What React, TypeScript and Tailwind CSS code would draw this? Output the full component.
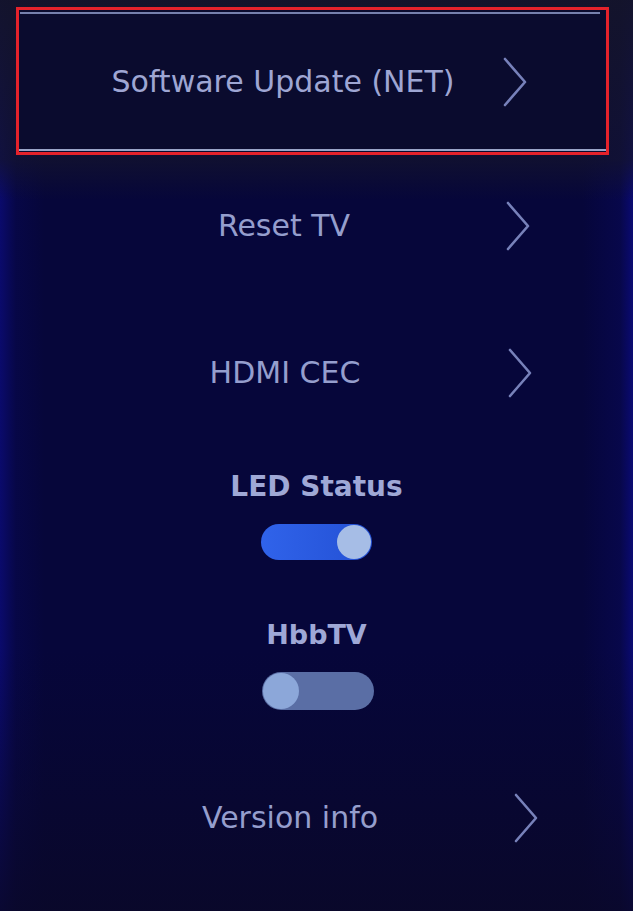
import { ReactNode } from "react";

function Chevron({ className }: { className?: string }) {
  return (
    <svg width="26" height="52" viewBox="0 0 26 52" className={className} fill="none">
      <polyline
        points="3,3 23,26 3,49"
        stroke="#7781ba"
        strokeWidth="2.6"
        strokeLinecap="round"
        strokeLinejoin="round"
      />
    </svg>
  );
}

function MenuRow({
  label,
  textOffset,
  chevronGap,
  className,
}: {
  label: string;
  textOffset: string;
  chevronGap: string;
  className?: string;
}) {
  return (
    <div className={`flex h-[60px] items-center ${className ?? ""}`}>
      <div className={`w-[400px] text-center text-[30px] leading-none text-[#959ecd] ${textOffset}`}>
        {label}
      </div>
      <Chevron className={chevronGap} />
    </div>
  );
}

function Toggle({ on, className }: { on: boolean; className?: string }) {
  if (on) {
    return (
      <div
        className={`flex h-[36px] w-[111px] items-center justify-end rounded-full bg-[linear-gradient(90deg,#3063ea,#2350d4)] pr-[1px] ${className ?? ""}`}
      >
        <div className="h-[34px] w-[34px] rounded-full bg-[#a6bde6]" />
      </div>
    );
  }
  return (
    <div
      className={`flex h-[38px] w-[112px] items-center rounded-full bg-[#5a6ea5] pl-[1px] ${className ?? ""}`}
    >
      <div className="h-[36px] w-[36px] rounded-full bg-[#8ca7d9]" />
    </div>
  );
}

function Label({ children, className }: { children: ReactNode; className?: string }) {
  return (
    <div className={`flex h-[40px] items-center justify-center font-bold leading-none text-[#9fa8d6] ${className ?? ""}`}>
      {children}
    </div>
  );
}

export default function App() {
  return (
    <div
      className="relative h-[911px] w-[633px] overflow-hidden bg-[#06063a] pt-[7px]"
      style={{ fontFamily: '"DejaVu Sans", Verdana, sans-serif' }}
    >
      {/* faint edge glow, dim top strip and darker bottom */}
      <div className="pointer-events-none absolute inset-0 bg-[linear-gradient(90deg,#0a0a6c_0%,rgba(8,8,90,0.4)_2.5%,rgba(6,6,58,0)_7%,rgba(6,6,58,0)_92%,rgba(10,10,100,0.4)_98%,#0a0a72_100%)]" />
      <div className="pointer-events-none absolute inset-x-0 top-0 h-[200px] bg-[linear-gradient(180deg,rgba(20,20,42,0.95)_0%,rgba(20,20,45,0.7)_80%,rgba(6,6,58,0)_100%)]" />
      <div className="pointer-events-none absolute inset-x-0 bottom-0 h-[260px] bg-[linear-gradient(0deg,rgba(10,8,40,0.85),rgba(6,6,58,0))]" />

      <div className="relative flex flex-col">
        {/* selected item */}
        <div className="ml-[16px] flex h-[148px] w-[593px] flex-col border-[3px] border-[#e5222b] bg-[#0a0b2e]">
          <div className="mt-[2px] ml-[1px] h-[2px] w-[580px] bg-[#7680ad]" />
          <div className="flex flex-1 items-center">
            <div className="ml-[64px] w-[400px] text-center text-[30px] leading-none text-[#9ea6d3]">
              Software Update (NET)
            </div>
            <Chevron className="ml-[19px]" />
          </div>
          <div className="mb-[1px] h-[2px] w-full bg-[#9aa4c8]" />
        </div>

        <MenuRow label="Reset TV" textOffset="ml-[84px]" chevronGap="ml-[21px]" className="mt-[41px]" />
        <MenuRow label="HDMI CEC" textOffset="ml-[85px]" chevronGap="ml-[22px]" className="mt-[87px]" />

        <Label className="mt-[64px] text-[28px]">LED Status</Label>
        <div className="mt-[17px] flex justify-center">
          <Toggle on className="ml-[-1px]" />
        </div>

        <Label className="mt-[54px] text-[27px]">HbbTV</Label>
        <div className="mt-[18px] flex justify-center">
          <Toggle on={false} className="ml-[3px]" />
        </div>

        <MenuRow label="Version info" textOffset="ml-[90px]" chevronGap="ml-[23px]" className="mt-[78px]" />
      </div>
    </div>
  );
}
